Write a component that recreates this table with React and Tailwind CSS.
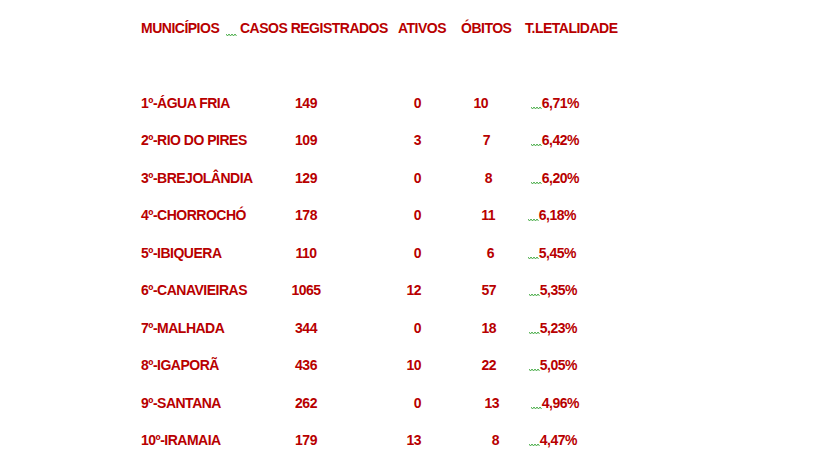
import React from "react";

const rows = [
  { nome: "1º-ÁGUA FRIA", casos: "149", ativos: "0", obitos: "10", obR: 488, tl: "6,71%", tlR: 579 },
  { nome: "2º-RIO DO PIRES", casos: "109", ativos: "3", obitos: "7", obR: 490, tl: "6,42%", tlR: 579 },
  { nome: "3º-BREJOLÂNDIA", casos: "129", ativos: "0", obitos: "8", obR: 492, tl: "6,20%", tlR: 579 },
  { nome: "4º-CHORROCHÓ", casos: "178", ativos: "0", obitos: "11", obR: 495, tl: "6,18%", tlR: 576 },
  { nome: "5º-IBIQUERA", casos: "110", ativos: "0", obitos: "6", obR: 494, tl: "5,45%", tlR: 576 },
  { nome: "6º-CANAVIEIRAS", casos: "1065", ativos: "12", obitos: "57", obR: 496, tl: "5,35%", tlR: 577 },
  { nome: "7º-MALHADA", casos: "344", ativos: "0", obitos: "18", obR: 496, tl: "5,23%", tlR: 577 },
  { nome: "8º-IGAPORÃ", casos: "436", ativos: "10", obitos: "22", obR: 496, tl: "5,05%", tlR: 577 },
  { nome: "9º-SANTANA", casos: "262", ativos: "0", obitos: "13", obR: 499, tl: "4,96%", tlR: 579 },
  { nome: "10º-IRAMAIA", casos: "179", ativos: "13", obitos: "8", obR: 499, tl: "4,47%", tlR: 577 },
];

// squiggle do corretor do Word
function Squiggle({ className = "" }) {
  return (
    <svg width="11" height="4" viewBox="0 0 11 4" className={className}>
      <path d="M0 1 L1.5 3 L3 1 L4.5 3 L6 1 L7.5 3 L9 1 L10.5 3" fill="none" stroke="#3aa63a" strokeWidth="0.9" />
    </svg>
  );
}

export default function App() {
  return (
    <div
      className="w-[815px] h-[459px] bg-white overflow-hidden pl-[141px] pt-[20px] text-[#b80000] text-[14px] tracking-[-0.5px] font-bold leading-[16px]"
      style={{ fontFamily: '"Liberation Sans", Arial, sans-serif' }}
    >
      {/* cabeçalho */}
      <div className="flex items-center h-[16px] whitespace-nowrap">
        <span className="w-[85px]">MUNICÍPIOS</span>
        <span className="w-[14px] flex items-end h-[16px] pb-[1px]">
          <Squiggle className="translate-y-[2px]" />
        </span>
        <span className="w-[158px]">CASOS REGISTRADOS</span>
        <span className="w-[63px]">ATIVOS</span>
        <span className="w-[64px]">ÓBITOS</span>
        <span>T.LETALIDADE</span>
      </div>

      <div className="mt-[48px] flex flex-col">
        {rows.map((r) => (
          <div key={r.nome} className="flex items-center h-[37.5px] whitespace-nowrap">
            <span className="w-[149px]">{r.nome}</span>
            <span className="w-[32px] text-center">{r.casos}</span>
            <span className="w-[99px] text-right">{r.ativos}</span>
            <span className="w-[79px] text-right" style={{ paddingRight: 500 - r.obR }}>
              {r.obitos}
            </span>
            <span
              className="w-[79px] flex justify-end items-center"
              style={{ paddingRight: 579 - r.tlR }}
            >
              <Squiggle className="translate-y-[5px]" />
              <span>{r.tl}</span>
            </span>
          </div>
        ))}
      </div>
    </div>
  );
}
